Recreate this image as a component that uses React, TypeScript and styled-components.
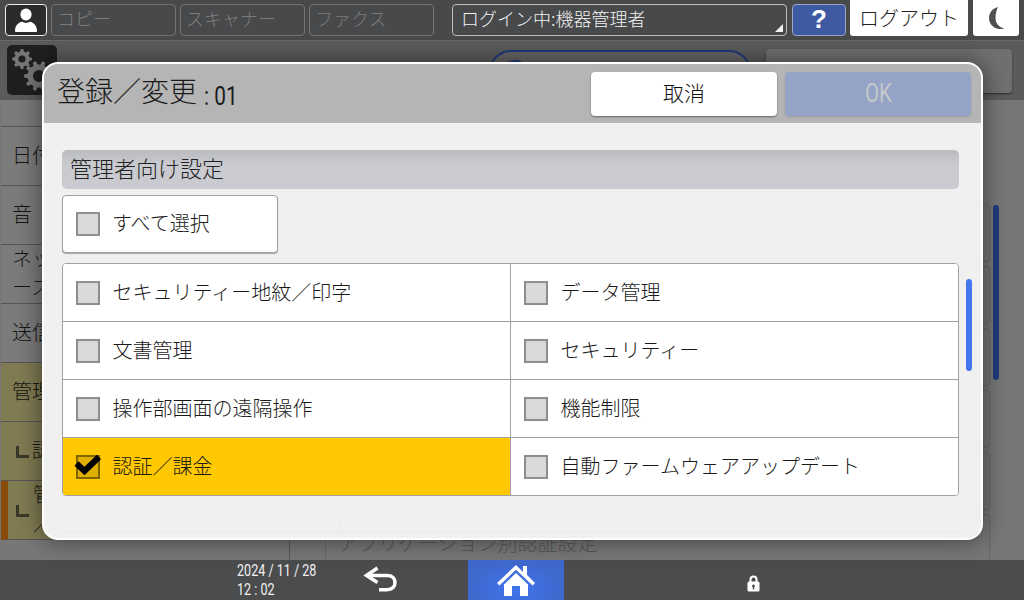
import React from 'react'
import styled, { createGlobalStyle } from 'styled-components'

const GlobalStyle = createGlobalStyle`
  html, body {
    margin: 0;
    padding: 0;
    background: #777;
  }
  * {
    box-sizing: border-box;
  }
  body {
    font-family: "Noto Sans CJK JP", "Noto Sans", sans-serif;
    font-weight: 300;
  }
`

const adminItems = [
  { label: 'セキュリティー地紋／印字' },
  { label: 'データ管理' },
  { label: '文書管理' },
  { label: 'セキュリティー' },
  { label: '操作部画面の遠隔操作' },
  { label: '機能制限' },
  { label: '認証／課金', checked: true },
  { label: '自動ファームウェアアップデート' }
]

const gearPath = (cx: number, cy: number, outer: number, inner: number, hole: number, teeth: number) => {
  const pts: string[] = []
  const step = (Math.PI * 2) / teeth
  for (let i = 0; i < teeth; i++) {
    const a = i * step
    const corners: [number, number][] = [
      [a - step * 0.3, inner],
      [a - step * 0.17, outer],
      [a + step * 0.17, outer],
      [a + step * 0.3, inner]
    ]
    corners.forEach(([t, r]) => {
      pts.push(`${(cx + Math.cos(t) * r).toFixed(2)} ${(cy + Math.sin(t) * r).toFixed(2)}`)
    })
  }
  return (
    `M${pts.join('L')}Z` +
    `M${cx + hole} ${cy}A${hole} ${hole} 0 1 0 ${cx - hole} ${cy}A${hole} ${hole} 0 1 0 ${cx + hole} ${cy}Z`
  )
}

const GearsIcon = () => (
  <svg width="50" height="50" viewBox="0 0 50 50">
    <path fillRule="evenodd" fill="#777" d={gearPath(15, 14, 10, 7.6, 3.6, 8)} />
    <path fillRule="evenodd" fill="#777" d={gearPath(32, 31, 15, 11.5, 6, 10)} />
  </svg>
)

const UserIcon = () => (
  <svg width="26" height="26" viewBox="0 0 26 26" fill="#fff">
    <ellipse cx="13" cy="7.5" rx="5.6" ry="6" />
    <path d="M2 24c0-5.500 3.500-8.500 7-9.200 2.500 1.500 5.500 1.500 8 0 3.500.7 7 3.700 7 9.200 0 .6-.5 1-1 1H3c-.5 0-1-.4-1-1z" />
  </svg>
)

const MoonIcon = () => (
  <svg width="22" height="24" viewBox="0 0 22 24">
    <path fill="#4f5052" d="M13 1C7 2.500 4 7 4 12c0 5.500 4 10 10 11 2 .2 3.500 0 5-.8-5-.7-8.500-5-8.500-10.200C10.500 8 11.500 4 13 1z" />
  </svg>
)

const BackIcon = () => (
  <svg width="36" height="28" viewBox="0 0 36 28" fill="none" stroke="#fff" strokeWidth="3.500">
    <path d="M14.500 2 3.500 9.500l11 7" />
    <path d="M4 9.500h20c5.500 0 8 3 8 7s-2.500 7.200-8 7.200h-8" />
  </svg>
)

const HomeIcon = () => (
  <svg width="40" height="36" viewBox="0 0 40 36">
    <path fill="#fff" d="M27 3h4v9l8 8-2.400 2.400L20 6.800 3.400 22.400 1 20 20 2l7 7z" />
    <path fill="#fff" fillRule="evenodd" d="M20 10 32 21.500V33H8V21.500zM16 23v10h8V23z" />
  </svg>
)

const LockIcon = () => (
  <svg width="13" height="17" viewBox="0 0 13 17">
    <path fill="none" stroke="#fff" strokeWidth="2" d="M3.500 7V4.500a3 3 0 0 1 6 0V7" />
    <path
      fill="#fff"
      fillRule="evenodd"
      d="M2 6.500h9a1.500 1.500 0 0 1 1.500 1.500v7a1.500 1.500 0 0 1-1.500 1.500H2A1.500 1.500 0 0 1 .5 15V8A1.500 1.500 0 0 1 2 6.500zM6.500 9.500a1.500 1.500 0 0 0-.7 2.800V14.500h1.400v-2.200a1.500 1.500 0 0 0-.7-2.800z"
    />
  </svg>
)

const CheckMark = () => (
  <CheckSvg width="28" height="22" viewBox="0 0 28 22">
    <path d="M2.500 9.500l8 7.500L25 3" fill="none" stroke="#000" strokeWidth="6" />
  </CheckSvg>
)

const App: React.FC = () => {
  return (
    <Screen>
      <GlobalStyle />
      <TopBar>
        <UserButton>
          <UserIcon />
        </UserButton>
        <AppTab>コピー</AppTab>
        <AppTab>スキャナー</AppTab>
        <AppTab>ファクス</AppTab>
        <LoginBox>ログイン中:機器管理者</LoginBox>
        <HelpButton>?</HelpButton>
        <LogoutButton>ログアウト</LogoutButton>
        <MoonButton>
          <MoonIcon />
        </MoonButton>
      </TopBar>

      <Main>
        <PageHeader>
          <GearTile>
            <GearsIcon />
          </GearTile>
          <PageTitle>設定</PageTitle>
          <SearchPill />
          <HeaderButton />
        </PageHeader>
        <PageBody>
          <Sidebar>
            <SideStub />
            <SideRow>日付／時刻</SideRow>
            <SideRow>音</SideRow>
            <SideRow>
              ネットワーク/インターフェ
              <br />
              ース
            </SideRow>
            <SideRow>送信</SideRow>
            <SideRow $tone="active">管理者向け設定</SideRow>
            <SideRow $tone="active" $child>
              認証／課金
            </SideRow>
            <SideRow $tone="current" $child>
              管理者認証
              <br />
              ／ユーザー認証
            </SideRow>
          </Sidebar>
          <ListArea>
            <ListRow />
            <ListRow />
            <ListRow />
            <ListRow />
            <ListRow />
            <ListRow>アプリケーション別認証設定</ListRow>
          </ListArea>
          <OuterScrollbar />
        </PageBody>
      </Main>

      <BottomBar>
        <DateBlock>
          <DateLine>2024 / 11 / 28</DateLine>
          <DateLine>12 : 02</DateLine>
        </DateBlock>
        <BackSlot>
          <BackIcon />
        </BackSlot>
        <HomeSlot>
          <HomeIcon />
        </HomeSlot>
        <LockSlot>
          <LockIcon />
        </LockSlot>
      </BottomBar>

      <Dialog>
        <DialogHeader>
          <DialogTitle>
            登録／変更
            <DialogNumber>: 01</DialogNumber>
          </DialogTitle>
          <CancelButton>取消</CancelButton>
          <OkButton>
            <OkLabel>OK</OkLabel>
          </OkButton>
        </DialogHeader>
        <DialogBody>
          <SectionHeading>管理者向け設定</SectionHeading>
          <SelectAll>
            <CheckBox />
            <ItemLabel>すべて選択</ItemLabel>
          </SelectAll>
          <ItemGrid>
            {adminItems.map((item) => (
              <ItemCell key={item.label} $checked={item.checked}>
                <CheckBox $checked={item.checked}>{item.checked && <CheckMark />}</CheckBox>
                <ItemLabel>{item.label}</ItemLabel>
              </ItemCell>
            ))}
          </ItemGrid>
          <DialogScrollbar />
          <GhostRule />
        </DialogBody>
      </Dialog>
    </Screen>
  )
}

const Screen = styled.div`
  position: relative;
  width: 1024px;
  height: 600px;
  overflow: hidden;
  display: flex;
  flex-direction: column;
  background: #777;
`

const TopBar = styled.div`
  height: 41px;
  flex: none;
  display: flex;
  align-items: flex-start;
  padding: 4px 5px 0;
  background: #48494b;
  border-bottom: 1px solid #6a6a6a;
`

const UserButton = styled.div`
  width: 42px;
  height: 32px;
  margin-right: 4px;
  display: flex;
  align-items: center;
  justify-content: center;
  background: #2b2b2b;
  border: 1px solid #eee;
  border-radius: 4px;
`

const AppTab = styled.div`
  width: 125px;
  height: 32px;
  margin-right: 4px;
  padding-left: 5px;
  font-size: 18px;
  line-height: 27px;
  color: #7c7c7c;
  border: 1px solid #747474;
  border-radius: 4px;
`

const LoginBox = styled.div`
  position: relative;
  width: 335px;
  height: 32px;
  margin-left: 14px;
  padding-left: 8px;
  font-size: 18px;
  line-height: 27px;
  color: #f2f2f2;
  border: 1px solid #bdbdbd;
  border-radius: 4px;

  &::after {
    content: '';
    position: absolute;
    right: 3px;
    bottom: 3px;
    border-left: 8px solid transparent;
    border-bottom: 8px solid #f2f2f2;
  }
`

const HelpButton = styled.div`
  width: 54px;
  height: 32px;
  margin-left: 5px;
  font-family: "Liberation Sans", sans-serif;
  font-size: 26px;
  font-weight: 700;
  line-height: 29px;
  text-align: center;
  color: #fff;
  background: #3d5aa3;
  border: 1px solid #9aa6c4;
  border-radius: 4px;
`

const LogoutButton = styled.div`
  width: 118px;
  height: 36px;
  margin: -4px 0 0 4px;
  font-size: 20px;
  line-height: 36px;
  text-align: center;
  color: #222;
  background: #fff;
  border-radius: 0 0 3px 3px;
`

const MoonButton = styled.div`
  width: 46px;
  height: 36px;
  margin: -4px 0 0 5px;
  display: flex;
  align-items: center;
  justify-content: center;
  background: #fff;
  border-radius: 0 0 3px 3px;
`

const Main = styled.div`
  flex: 1;
  min-height: 0;
  overflow: hidden;
  display: flex;
  flex-direction: column;
`

const PageHeader = styled.div`
  height: 59px;
  flex: none;
  display: flex;
  align-items: flex-start;
  padding: 4px 12px 0 7px;
  background: #5b5b5b;
`

const GearTile = styled.div`
  width: 50px;
  height: 50px;
  background: #1f1f1f;
  border-radius: 5px;
`

const PageTitle = styled.div`
  margin: 10px 0 0 101px;
  font-size: 28px;
  line-height: 40px;
  color: #1a1a1a;
`

const SearchPill = styled.div`
  position: relative;
  width: 262px;
  height: 44px;
  margin: 5px 0 0 auto;
  background: #666;
  border: 2px solid #1f3a7c;
  border-radius: 22px;

  &::before {
    content: '';
    position: absolute;
    left: 8px;
    top: 8px;
    width: 28px;
    height: 28px;
    border: 2px solid #1f3a7c;
    border-radius: 50%;
  }
`

const HeaderButton = styled.div`
  width: 246px;
  height: 44px;
  margin: 4px 0 0 15px;
  background: #707070;
  border-radius: 4px;
  box-shadow: 0 1px 2px rgba(0, 0, 0, 0.5);
`

const PageBody = styled.div`
  flex: 1;
  min-height: 0;
  display: flex;
`

const Sidebar = styled.div`
  width: 290px;
  flex: none;
  padding-left: 1px;
  border-right: 1px solid #555;
`

const SideStub = styled.div`
  height: 27px;
  background: #7b7b7b;
  border-bottom: 1px solid #555;
`

const SideRow = styled.div<{ $tone?: 'active' | 'current'; $child?: boolean }>`
  position: relative;
  height: 59px;
  display: flex;
  flex-direction: column;
  justify-content: center;
  padding-bottom: 4px;
  padding-left: ${({ $child, $tone }) => ($tone === 'current' ? 25 : $child ? 31 : 11)}px;
  font-size: 20px;
  line-height: 29px;
  color: #151515;
  white-space: nowrap;
  background: ${({ $tone }) => ($tone ? '#807b52' : '#7b7b7b')};
  border-bottom: 1px solid #555;
  border-left: ${({ $tone }) => ($tone === 'current' ? '7px solid #8a4a08' : '0 solid transparent')};

  ${({ $child, $tone }) =>
    $child
      ? `&::before {
          content: '';
          position: absolute;
          left: ${$tone === 'current' ? 8 : 15}px;
          top: 24px;
          width: 10px;
          height: 9px;
          border-left: 3px solid #3a3826;
          border-bottom: 3px solid #3a3826;
        }`
      : ''}
`

const ListArea = styled.div`
  width: 700px;
  flex: none;
  padding: 104px 0 0 35px;
  display: flex;
  flex-direction: column;
  gap: 4px;
`

const ListRow = styled.div`
  flex: none;
  height: 58px;
  padding-left: 12px;
  font-size: 20px;
  line-height: 56px;
  color: #585858;
  border: 1px solid #666;
  border-radius: 4px;
  white-space: nowrap;
`

const OuterScrollbar = styled.div`
  width: 6px;
  height: 175px;
  margin: 105px 0 0 3px;
  background: #1f3a7c;
  border-radius: 3px;
`

const BottomBar = styled.div`
  height: 40px;
  flex: none;
  display: flex;
  background: #4b4c4e;
`

const DateBlock = styled.div`
  width: 360px;
  flex: none;
  padding: 1px 0 0 237px;
`

const DateLine = styled.div`
  font-family: Roboto, sans-serif;
  font-weight: 400;
  font-size: 17px;
  line-height: 19px;
  color: #f2f2f2;
  white-space: nowrap;
  transform: scaleX(0.74);
  transform-origin: left center;
`

const BackSlot = styled.div`
  width: 108px;
  flex: none;
  padding: 6px 0 0 3px;
`

const HomeSlot = styled.div`
  width: 96px;
  flex: none;
  display: flex;
  justify-content: center;
  padding-top: 3px;
  background: radial-gradient(ellipse at center 70%, #3f74ee 0%, #4069d0 60%);
`

const LockSlot = styled.div`
  flex: none;
  padding: 13px 0 0 183px;
`

const Dialog = styled.div`
  position: absolute;
  left: 42px;
  top: 62px;
  width: 941px;
  height: 478px;
  display: flex;
  flex-direction: column;
  overflow: hidden;
  background: #f0f0f0;
  border: 2px solid #fff;
  border-radius: 16px;
  box-shadow: 0 0 24px rgba(0, 0, 0, 0.5);
`

const DialogHeader = styled.div`
  height: 59px;
  flex: none;
  display: flex;
  align-items: flex-start;
  padding: 8px 10px 0 13px;
  background: #b5b5b5;
`

const DialogTitle = styled.div`
  flex: 1;
  margin-top: -2px;
  font-size: 28px;
  line-height: 40px;
  color: #1a1a1a;
  white-space: nowrap;
`

const DialogNumber = styled.span`
  display: inline-block;
  margin-left: 7px;
  font-family: Roboto, sans-serif;
  font-weight: 400;
  font-size: 26px;
  transform: translateY(3px) scaleX(0.8);
  transform-origin: left center;
`

const CancelButton = styled.div`
  width: 186px;
  height: 44px;
  font-size: 21px;
  line-height: 40px;
  text-align: center;
  color: #111;
  background: #fff;
  border-radius: 4px;
  box-shadow: 0 1px 2px rgba(0, 0, 0, 0.45);
`

const OkButton = styled.div`
  width: 186px;
  height: 44px;
  margin-left: 8px;
  text-align: center;
  background: #94a3c6;
  border-radius: 4px;
  box-shadow: 0 1px 2px rgba(0, 0, 0, 0.15);
`

const OkLabel = styled.span`
  display: inline-block;
  font-family: Roboto, sans-serif;
  font-weight: 400;
  font-size: 25px;
  line-height: 44px;
  color: #c6c8cc;
  transform: scaleX(0.82);
`

const DialogBody = styled.div`
  position: relative;
  flex: 1;
  min-height: 0;
  padding: 27px 22px 0 18px;
`

const SectionHeading = styled.div`
  height: 39px;
  padding-left: 8px;
  font-size: 22px;
  line-height: 34px;
  color: #222;
  background: linear-gradient(#b9bbc0, #c9cbd0 40%);
  border-radius: 5px;
`

const SelectAll = styled.div`
  width: 216px;
  height: 58px;
  margin-top: 6px;
  display: flex;
  align-items: center;
  gap: 12px;
  padding-left: 13px;
  background: #fff;
  border: 1px solid #a0a0a0;
  border-radius: 4px;
  box-shadow: 0 1px 1px rgba(0, 0, 0, 0.3);
`

const ItemGrid = styled.div`
  width: 897px;
  height: 233px;
  margin-top: 10px;
  display: grid;
  grid-template-columns: 448px 447px;
  grid-auto-rows: 58px;
  overflow: hidden;
  background: #fff;
  border: 1px solid #a0a0a0;
  border-radius: 4px;
`

const ItemCell = styled.div<{ $checked?: boolean }>`
  display: flex;
  align-items: center;
  gap: 12.5px;
  padding: 1px 0 0 13px;
  background: ${({ $checked }) => ($checked ? '#ffc800' : '#fff')};
  border-bottom: 1px solid #a0a0a0;

  &:nth-child(odd) {
    border-right: 1px solid #a0a0a0;
  }
`

const CheckBox = styled.div<{ $checked?: boolean }>`
  position: relative;
  width: 24px;
  height: 24px;
  flex: none;
  background: ${({ $checked }) => ($checked ? '#e0b000' : '#d9d9d9')};
  border: 2px solid ${({ $checked }) => ($checked ? '#7f6400' : '#8e8e8e')};
`

const CheckSvg = styled.svg`
  position: absolute;
  left: -4px;
  top: -3px;
`

const ItemLabel = styled.div`
  margin-bottom: 2px;
  font-size: 20px;
  line-height: 28px;
  color: #1a1a1a;
  white-space: nowrap;
`

const DialogScrollbar = styled.div`
  position: absolute;
  left: 922px;
  top: 156px;
  width: 6px;
  height: 92px;
  background: #4477ee;
  border-radius: 3px;
`

const GhostRule = styled.div`
  position: relative;
  margin-top: 35px;
  width: 897px;
  height: 1px;
  background: #e8e8e8;

  &::after {
    content: '';
    position: absolute;
    left: 278px;
    top: -8px;
    width: 1px;
    height: 8px;
    background: #e8e8e8;
  }
`

export default App
